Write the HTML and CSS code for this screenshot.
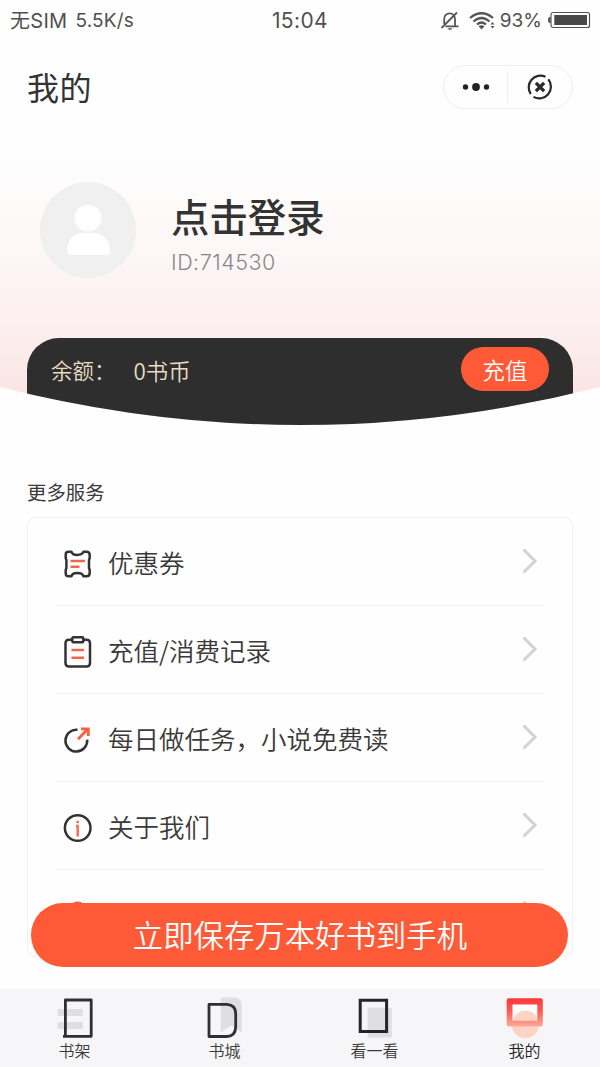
FILE: index.html
```html
<!DOCTYPE html>
<html lang="zh-CN">
<head>
<meta charset="utf-8">
<title>我的</title>
<link rel="stylesheet" href="styles.css">
</head>
<body>
<div class="app">
  <header class="hero">
    <div class="status">
      <div class="status-left"><span class="sim">无SIM</span><span class="speed">5.5K/s</span></div>
      <div class="clock">15:04</div>
      <div class="status-right">
        <svg class="bell" width="20" height="20" viewBox="0 0 20 20" fill="none" stroke="#555" stroke-width="1.800"><path d="M4.2 13V8C4.2 4.500 6.600 2.300 9.600 2.300S15 4.500 15 8V15M5.500 15.300H18.500M1.500 17L17 1.500"/><path d="M7.500 17.300H12.500Q10 20.500 7.500 17.300Z" fill="#555" stroke="none"/></svg>
        <svg class="wifi" width="26" height="20" viewBox="0 0 26 20" fill="none" stroke="#555" stroke-width="2.200"><path d="M1 7Q12.500-2.500 24 7M4.500 10.500Q12.500 3.500 20.500 10.500M8 13.500Q12.500 9.500 17 13.500"/><path d="M9.500 15.200Q12.500 13.200 15.500 15.200L12.500 18.500ZM21.500 13.500L23.500 11L25.500 13.500ZM21.500 15L23.500 17.500L25.500 15Z" fill="#555" stroke="none"/></svg>
        <span class="percent">93%</span>
        <svg class="battery" width="44" height="18" viewBox="0 0 44 18"><path d="M3.500 6H2.500Q1 6 1 9T2.500 12H3.500Z" fill="#555"/><rect x="4" y="1.500" width="38.500" height="15" rx="2" fill="#fff" stroke="#555" stroke-width="1.200"/><rect x="7.300" y="4" width="32.700" height="10" fill="#484848"/></svg>
      </div>
    </div>
    <div class="titlebar">
      <h1 class="title">我的</h1>
      <div class="capsule">
        <svg class="more" width="64" height="42" viewBox="0 0 64 42" fill="#222"><circle cx="21.500" cy="21" r="2.700"/><circle cx="32" cy="21" r="3.900"/><circle cx="42.500" cy="21" r="2.700"/></svg>
        <svg class="close" width="64" height="32" viewBox="0 5 64 32" fill="none" stroke="#292929"><path stroke-width="2.200" d="M37.500 10.800A11.700 11.700 0 0 0 22.800 28M25.500 30.900A11.700 11.700 0 0 0 40.300 13.300"/><path stroke-width="3.400" d="M27.900 16.900L36.100 25.100M36.100 16.900L27.900 25.100"/></svg>
      </div>
    </div>
    <div class="profile">
      <svg class="avatar" width="96" height="96" viewBox="0 0 96 96"><circle cx="48" cy="48" r="48" fill="#f0f0f0"/><circle cx="48" cy="36" r="13.300" fill="#fff"/><path d="M27 69C27 57 35 51 43 51H54C62 51 70 57 70 69Q70 73 66 73H31Q27 73 27 69Z" fill="#fff"/></svg>
      <div class="identity">
        <div class="login">点击登录</div>
        <div class="user-id">ID:714530</div>
      </div>
    </div>
    <section class="wallet">
      <span class="label">余额：</span><span class="coins">0书币</span>
      <button class="recharge">充值</button>
    </section>
  </header>

  <main class="services">
    <h2 class="heading">更多服务</h2>
    <div class="menu">
      <div class="item">
        <svg class="icon" width="30" height="30" viewBox="0 0 30 30" fill="none" stroke="#333" stroke-width="2.500" stroke-linejoin="round"><path d="M5.500 2.700H8.500C9.500 7 19 7 20.500 2.700H23.500Q26.700 2.700 26.700 6V9L26 11V19L26.700 21V24Q26.700 27.300 23.500 27.300H20.500C19 23 9.500 23 8.500 27.300H5.500Q2.700 27.300 2.700 24.500V21L3.400 19V11L2.700 9V5.500Q2.700 2.700 5.500 2.700Z"/><path stroke="#f2644c" d="M7.500 12H22M7.500 17.800H16.500"/></svg>
        <span class="name">优惠券</span>
        <svg class="arrow" width="16" height="28" viewBox="0 0 16 28"><path d="M1.500 2.500L13 14L1.500 25.500"/></svg>
      </div>
      <div class="item">
        <svg class="icon" width="30" height="32" viewBox="0 0 30 32" fill="none" stroke="#333" stroke-width="2.500" stroke-linejoin="round"><path d="M9 3.800H6Q2.500 3.800 2.500 7.300V27Q2.500 30.500 6 30.500H23.500Q27 30.500 27 27V7.300Q27 3.800 23.500 3.800H20.500"/><rect x="9.300" y="1.300" width="11" height="5" rx="1"/><path stroke="#f2644c" d="M8.500 14H21M8.500 21.800H21"/></svg>
        <span class="name">充值/消费记录</span>
        <svg class="arrow" width="16" height="28" viewBox="0 0 16 28"><path d="M1.500 2.500L13 14L1.500 25.500"/></svg>
      </div>
      <div class="item">
        <svg class="icon" width="30" height="30" viewBox="0 0 30 30" fill="none" stroke="#333" stroke-width="2.500"><path d="M14.500 4.800A10.900 10.900 0 1 0 24.200 14.700"/><path stroke="#fa6040" stroke-width="2.800" d="M15 14.200L24.500 4.300M18 3.800H25.300V11"/></svg>
        <span class="name">每日做任务，小说免费读</span>
        <svg class="arrow" width="16" height="28" viewBox="0 0 16 28"><path d="M1.500 2.500L13 14L1.500 25.500"/></svg>
      </div>
      <div class="item">
        <svg class="icon" width="30" height="30" viewBox="0 0 30 30" fill="none" stroke="#333" stroke-width="2.500"><circle cx="14.700" cy="15" r="12.800"/><path stroke="#f2705b" stroke-width="2.500" d="M14.700 7.700V10.200M13 13H14.700V23.500"/></svg>
        <span class="name">关于我们</span>
        <svg class="arrow" width="16" height="28" viewBox="0 0 16 28"><path d="M1.500 2.500L13 14L1.500 25.500"/></svg>
      </div>
      <div class="item">
        <svg class="icon" width="30" height="30" viewBox="0 0 30 30"><circle cx="14.700" cy="8.500" r="8" fill="#f95c3d"/></svg>
        <svg class="arrow" width="16" height="28" viewBox="0 0 16 28"><path d="M1.500 2.500L13 14L1.500 25.500"/></svg>
      </div>
    </div>
  </main>

  <button class="save">立即保存万本好书到手机</button>

  <nav class="tabs">
    <div class="tab">
      <svg width="44" height="43" viewBox="0 0 44 43"><path d="M4.700 12H29.700V19H4.700ZM4.700 25H29.700V32H4.700Z" fill="#dfdfe1"/><path d="M12.400 3H38.200V39.300H12.400ZM12.400 33V39.300H10" fill="none" stroke="#303030" stroke-width="2.800" stroke-linejoin="round"/></svg>
      <span>书架</span>
    </div>
    <div class="tab">
      <svg width="44" height="43" viewBox="0 0 44 43"><path d="M17.700 .5H32Q38.700 1.500 38.700 8.500V35.500L28.200 28.500L17.700 35.500Z" fill="#dfdfe1"/><path d="M6 7.400H24Q32.700 8 32.700 16.500V30Q32.500 39 24 39.500H6Z" fill="none" stroke="#303030" stroke-width="2.800" stroke-linejoin="round"/></svg>
      <span>书城</span>
    </div>
    <div class="tab">
      <svg width="44" height="43" viewBox="0 0 44 43"><path d="M14.700 10.700H38.700V40.500H14.700Z" fill="#dfdfe1"/><path d="M7.200 3.200H33.600V34.600H7.200Z" fill="none" stroke="#252525" stroke-width="3"/></svg>
      <span>看一看</span>
    </div>
    <div class="tab">
      <svg width="44" height="43" viewBox="0 0 44 43"><defs><linearGradient id="frame" x1="0" y1="0" x2="0" y2="1"><stop offset="0" stop-color="#f93638"/><stop offset=".5" stop-color="#fa6057"/><stop offset="1" stop-color="#fcab9b"/></linearGradient></defs><path fill="#fff" d="M9 7H35V24H9Z"/><circle cx="22.500" cy="27.500" r="13.700" fill="#fdd3c6"/><path fill="url(#frame)" fill-rule="evenodd" d="M5.700 1.300H37.800Q39.800 1.300 39.800 3.300V27.500Q39.800 29.500 37.800 29.500H5.700Q3.700 29.500 3.700 27.500V3.300Q3.700 1.300 5.700 1.300ZM9.500 7.500V23.700H34.300V7.500Z"/></svg>
      <span class="current">我的</span>
    </div>
  </nav>
</div>
</body>
</html>
```

FILE: styles.css
```css
* { box-sizing: border-box; }
body {
  margin: 0;
  background: #fefefe;
  color: #3a3a3a;
  font-family: "Noto Sans CJK SC", sans-serif;
  font-weight: 350;
}
h1, h2 { margin: 0; font-weight: 400; }
button { border: 0; padding: 0; font: inherit; color: #fff; background: #ff5a37; }
svg { display: block; flex: none; }

.app { height: 1067px; overflow: hidden; display: flex; flex-direction: column; }

.hero {
  flex: none;
  height: 426px;
  display: flex;
  flex-direction: column;
  background: linear-gradient(#fefefe 0, #fefefe 150px, #fdf6f6 260px, #fcecec 350px, #fbe3e4 395px);
  clip-path: path("M0 0H600V387Q300 463 0 387Z");
}
.status {
  height: 40px;
  padding: 2px 10px 0;
  display: grid;
  grid-template-columns: 1fr auto 1fr;
  align-items: center;
  font: 400 20px/38px Inter, "Noto Sans CJK SC", sans-serif;
  color: #505050;
}
.status-left { display: flex; gap: 8px; }
.sim { letter-spacing: .3px; }
.speed { font-size: 19px; letter-spacing: .15px; }
.clock { font-size: 21px; letter-spacing: .4px; }
.status-right { display: flex; align-items: center; justify-content: flex-end; }
.bell, .wifi { margin-top: -1px; }
.wifi { margin-left: 9px; margin-right: 5px; }
.percent { font-size: 19px; }
.battery { margin: -2px -1px 0 5px; }

.titlebar {
  height: 94px;
  padding: 0 27px;
  display: flex;
  align-items: center;
  justify-content: space-between;
}
.title { font-size: 32px; line-height: 46px; letter-spacing: .4px; padding-bottom: 2px; color: #333; }
.capsule {
  width: 130px;
  height: 44px;
  border: 1px solid #efefef;
  border-radius: 22px;
  display: flex;
  align-items: center;
}
.close { box-shadow: -1px 0 #eee; }

.profile { height: 204px; padding: 48px 0 0 40px; display: flex; gap: 35px; }
.identity { padding-top: 6px; }
.login { font-size: 38.4px; line-height: 54px; font-weight: 500; color: #333; }
.user-id { margin-top: 4px; font: 300 21.500px/32px Inter, sans-serif; color: #888; letter-spacing: .5px; }

.wallet {
  flex: 1;
  margin: 0 27px;
  padding: 9px 24px 0;
  border-radius: 32px 32px 0 0;
  background: #2e2e2e;
  color: #e8dcc2;
  display: flex;
  font-size: 21.5px;
  line-height: 46px;
}
.coins { margin-left: 18px; font-size: 22.400px; }
.recharge { width: 88px; height: 44px; margin-left: auto; border-radius: 22px; font-size: 22.400px; line-height: 44px; }

.services { flex: none; height: 563px; padding: 52px 27px 0; }
.heading { font-size: 19.400px; line-height: 28px; }
.menu {
  height: 440px;
  margin-top: 11px;
  border: 1px solid #f1f1f1;
  border-radius: 8px;
  padding: 0 27px;
  overflow: hidden;
}
.item {
  height: 88px;
  padding: 0 7px 0 8px;
  border-bottom: 1px solid #f1f1f1;
  display: flex;
  align-items: center;
}
.icon { margin-top: 4px; }
.name { margin-left: 15px; padding-top: 1px; font-size: 25.500px; line-height: 38px; white-space: nowrap; }
.arrow { margin-left: auto; margin-top: -1px; fill: none; stroke: #d3d3d3; stroke-width: 3; }

.save {
  flex: none;
  position: relative;
  width: 537px;
  height: 64px;
  margin: -86.500px 0 22.500px 31.400px;
  border-radius: 32px;
  font-size: 30.400px;
  line-height: 63px;
}
.tabs { flex: none; height: 78px; background: #f6f6f8; display: grid; grid-template-columns: repeat(4, 1fr); }
.tab {
  padding-top: 8px;
  display: flex;
  flex-direction: column;
  align-items: center;
  font-size: 16px;
  line-height: 20px;
}
.tab span { margin-right: 1px; }
.current { color: #222; }
```
